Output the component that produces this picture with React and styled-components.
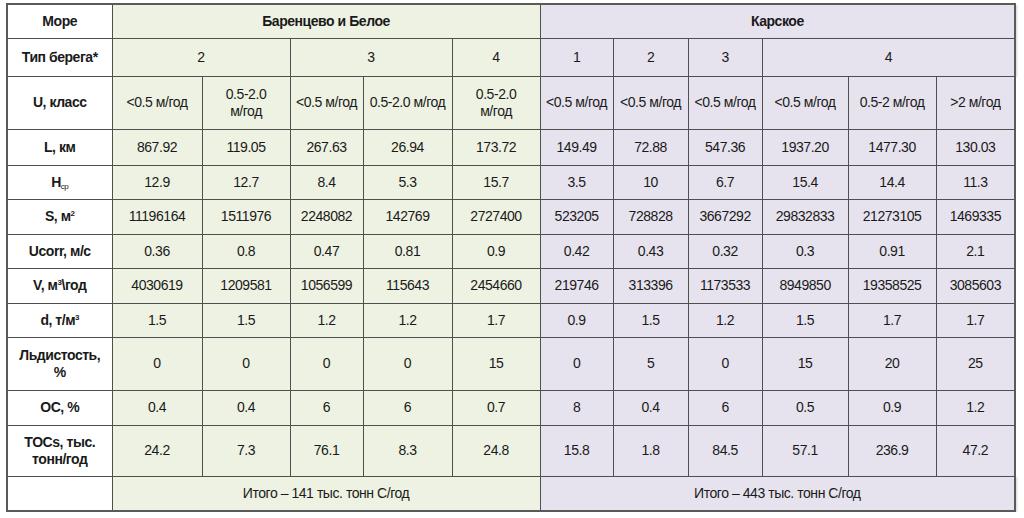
import React from "react";
import styled, { createGlobalStyle } from "styled-components";

const GlobalStyle = createGlobalStyle`
  html, body {
    margin: 0;
    padding: 0;
    background: #ffffff;
  }
  body {
    font-family: "Liberation Sans", Arial, sans-serif;
  }
`;

const colWidths = [105, 90, 88, 73, 89, 88, 73, 75, 74, 86, 88, 79];
const rowHeights = [34, 38, 53, 36, 34, 35, 34, 35, 34, 53, 35, 51, 35];

// 5 Barents columns, then 6 Kara columns
const rows = [
  {
    label: "L, км",
    values: ["867.92", "119.05", "267.63", "26.94", "173.72", "149.49", "72.88", "547.36", "1937.20", "1477.30", "130.03"],
  },
  {
    label: (
      <>
        H<sub>ср</sub>
      </>
    ),
    values: ["12.9", "12.7", "8.4", "5.3", "15.7", "3.5", "10", "6.7", "15.4", "14.4", "11.3"],
  },
  {
    label: (
      <>
        S, м<sup>2</sup>
      </>
    ),
    values: ["11196164", "1511976", "2248082", "142769", "2727400", "523205", "728828", "3667292", "29832833", "21273105", "1469335"],
  },
  {
    label: "Ucorr, м/с",
    values: ["0.36", "0.8", "0.47", "0.81", "0.9", "0.42", "0.43", "0.32", "0.3", "0.91", "2.1"],
  },
  {
    label: (
      <>
        V, м<sup>3</sup>\год
      </>
    ),
    values: ["4030619", "1209581", "1056599", "115643", "2454660", "219746", "313396", "1173533", "8949850", "19358525", "3085603"],
  },
  {
    label: (
      <>
        d, т/м<sup>3</sup>
      </>
    ),
    values: ["1.5", "1.5", "1.2", "1.2", "1.7", "0.9", "1.5", "1.2", "1.5", "1.7", "1.7"],
  },
  {
    label: (
      <>
        Льдистость,
        <br />%
      </>
    ),
    values: ["0", "0", "0", "0", "15", "0", "5", "0", "15", "20", "25"],
  },
  {
    label: "ОС, %",
    values: ["0.4", "0.4", "6", "6", "0.7", "8", "0.4", "6", "0.5", "0.9", "1.2"],
  },
  {
    label: (
      <>
        TOCs, тыс.
        <br />
        тонн/год
      </>
    ),
    values: ["24.2", "7.3", "76.1", "8.3", "24.8", "15.8", "1.8", "84.5", "57.1", "236.9", "47.2"],
  },
];

const uClasses = [
  "<0.5 м/год",
  <>0.5-2.0<br />м/год</>,
  "<0.5 м/год",
  "0.5-2.0 м/год",
  <>0.5-2.0<br />м/год</>,
  "<0.5 м/год",
  "<0.5 м/год",
  "<0.5 м/год",
  "<0.5 м/год",
  "0.5-2 м/год",
  ">2 м/год",
];

const tones = { label: "#ffffff", green: "#eef2e2", purple: "#e7e3ee" };

const Table = styled.table`
  margin: 3px 0 0 6px;
  width: 1009px;
  table-layout: fixed;
  border-collapse: collapse;
  border: 2px solid #5a5a5a;
  color: #1a1a1a;
  font-size: 14px;
  letter-spacing: -0.45px;
`;

const Row = styled.tr`
  height: ${(p) => p.$h}px;
`;

const Cell = styled.td`
  background: ${(p) => tones[p.$tone]};
  border: 1px solid #4f4f4f;
  padding: 0 2px;
  text-align: center;
  vertical-align: middle;
  line-height: 17px;
  white-space: nowrap;
  font-weight: ${(p) => (p.$bold ? 700 : 400)};
  box-shadow: ${(p) => (p.$shadow ? "2px 1px 2px rgba(0,0,0,0.18)" : "none")};

  sup {
    font-size: 8px;
    vertical-align: 5px;
    line-height: 0;
  }
  sub {
    font-size: 8px;
    font-weight: 400;
    vertical-align: -2px;
    line-height: 0;
  }
`;

const Label = styled(Cell).attrs({ $tone: "label", $bold: true })``;

const toneAt = (i) => (i < 5 ? "green" : "purple");

export default function App() {
  return (
    <>
      <GlobalStyle />
      <Table>
        <colgroup>
          {colWidths.map((w, i) => (
            <col key={i} style={{ width: w }} />
          ))}
        </colgroup>
        <tbody>
          <Row $h={rowHeights[0]}>
            <Label>Море</Label>
            <Cell $tone="green" $bold colSpan={5}>
              Баренцево и Белое
            </Cell>
            <Cell $tone="purple" $bold $shadow colSpan={6}>
              Карское
            </Cell>
          </Row>
          <Row $h={rowHeights[1]}>
            <Label>Тип берега*</Label>
            <Cell $tone="green" colSpan={2}>2</Cell>
            <Cell $tone="green" colSpan={2}>3</Cell>
            <Cell $tone="green">4</Cell>
            <Cell $tone="purple">1</Cell>
            <Cell $tone="purple">2</Cell>
            <Cell $tone="purple">3</Cell>
            <Cell $tone="purple" $shadow colSpan={3}>4</Cell>
          </Row>
          <Row $h={rowHeights[2]}>
            <Label>U, класс</Label>
            {uClasses.map((u, i) => (
              <Cell key={i} $tone={toneAt(i)}>
                {u}
              </Cell>
            ))}
          </Row>
          {rows.map((r, ri) => (
            <Row key={ri} $h={rowHeights[ri + 3]}>
              <Label>{r.label}</Label>
              {r.values.map((v, i) => (
                <Cell key={i} $tone={toneAt(i)}>
                  {v}
                </Cell>
              ))}
            </Row>
          ))}
          <Row $h={rowHeights[12]}>
            <Label />
            <Cell $tone="green" colSpan={5}>
              Итого – 141 тыс. тонн С/год
            </Cell>
            <Cell $tone="purple" $shadow colSpan={6}>
              Итого – 443 тыс. тонн С/год
            </Cell>
          </Row>
        </tbody>
      </Table>
    </>
  );
}
